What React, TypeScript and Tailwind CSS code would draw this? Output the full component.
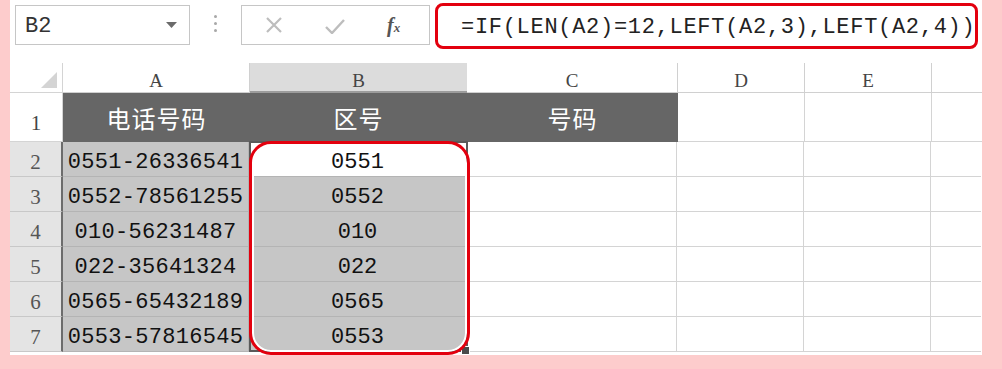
import React from "react";

const mono = { fontFamily: '"Liberation Mono", "DejaVu Sans Mono", monospace' };
const serif = { fontFamily: '"Liberation Serif", "DejaVu Serif", serif' };
const cjk = { fontFamily: '"Noto Sans CJK SC", "Noto Sans", sans-serif' };

const rows = [
  { n: "2", phone: "0551-26336541", code: "0551" },
  { n: "3", phone: "0552-78561255", code: "0552" },
  { n: "4", phone: "010-56231487", code: "010" },
  { n: "5", phone: "022-35641324", code: "022" },
  { n: "6", phone: "0565-65432189", code: "0565" },
  { n: "7", phone: "0553-57816545", code: "0553" },
];

const FormulaBar: React.FC = () => (
  <div className="flex h-[63px] items-start pl-[5px]">
    {/* Name box */}
    <div className="mt-[5px] flex h-[40px] w-[175px] items-center justify-between border border-[#c6c6c6] pl-[9px] pr-[12px]">
      <span style={mono} className="pt-[2px] text-[22px] text-[#333]">
        B2
      </span>
      <svg width="11" height="6" viewBox="0 0 11 6">
        <path d="M0 0 L11 0 L5.5 6 Z" fill="#6b6b6b" />
      </svg>
    </div>
    <div className="ml-[24px] mt-[15px] flex flex-col gap-[4px]">
      <div className="h-[3px] w-[3px] rounded-full bg-[#a8a8a8]" />
      <div className="h-[3px] w-[3px] rounded-full bg-[#a8a8a8]" />
      <div className="h-[3px] w-[3px] rounded-full bg-[#a8a8a8]" />
    </div>
    {/* Cancel / enter / fx */}
    <div className="ml-[24px] mt-[5px] flex h-[40px] w-[189px] items-center border border-[#c6c6c6]">
      <svg className="ml-[24px]" width="16" height="16" viewBox="0 0 16 16">
        <path d="M1 1 L15 15 M15 1 L1 15" stroke="#bdbdbd" strokeWidth="2.2" />
      </svg>
      <svg className="ml-[43px] mt-[3px]" width="20" height="15" viewBox="0 0 20 15">
        <path d="M1 8 L7 14 L19 1" stroke="#bdbdbd" strokeWidth="2.4" fill="none" />
      </svg>
      <span style={serif} className="ml-[42px] text-[20px] font-bold italic text-[#555]">
        f<span className="text-[13px]">x</span>
      </span>
    </div>
    {/* Formula */}
    <div className="ml-[5px] mt-[3px] flex h-[46px] w-[543px] items-center rounded-[8px] border-[3px] border-[#e3000e] pl-[23px]">
      <span style={mono} className="pt-[2px] text-[22px] tracking-[0.7px] text-[#222]">
        =IF(LEN(A2)=12,LEFT(A2,3),LEFT(A2,4))
      </span>
    </div>
  </div>
);

const App: React.FC = () => {
  return (
    <div className="h-[369px] w-[1002px] bg-[#fdcccc] pb-[14px] pl-[10px] pr-[20px]">
      <div className="flex h-[355px] w-[972px] flex-col bg-white">
        <FormulaBar />

        <div className="relative flex flex-col">
          {/* Column headers */}
          <div className="flex h-[30px]">
            <div className="flex w-[53px] items-end justify-end border-r border-b border-[#d4d4d4] pb-[4px] pr-[5px]">
              <svg width="16" height="16" viewBox="0 0 16 16">
                <path d="M16 0 L16 16 L0 16 Z" fill="#d4d4d4" />
              </svg>
            </div>
            <div style={serif} className="flex w-[187px] items-center justify-center border-r border-b border-[#d0d0d0] pt-[8px] text-[19px] text-[#444]">
              A
            </div>
            <div style={serif} className="flex w-[217px] items-center justify-center border-b-2 border-[#9c9c9c] bg-[#dcdcdc] pt-[8px] text-[19px] text-[#444]">
              B
            </div>
            <div style={serif} className="flex w-[211px] items-center justify-center border-r border-b border-[#d0d0d0] pt-[8px] text-[19px] text-[#444]">
              C
            </div>
            <div style={serif} className="flex w-[127px] items-center justify-center border-r border-b border-[#d0d0d0] pt-[8px] text-[19px] text-[#444]">
              D
            </div>
            <div style={serif} className="flex w-[127px] items-center justify-center border-r border-b border-[#d0d0d0] pt-[8px] text-[19px] text-[#444]">
              E
            </div>
            <div className="w-[50px] border-b border-[#d0d0d0]" />
          </div>

          {/* Row 1 */}
          <div className="flex h-[49px]">
            <div style={serif} className="flex w-[53px] items-end justify-center border-r border-b border-[#d4d4d4] pb-[2px] text-[21px] text-[#444]">
              1
            </div>
            <div style={cjk} className="flex w-[187px] items-center justify-center bg-[#666666] text-[24px] tracking-[1px] text-white">
              电话号码
            </div>
            <div style={cjk} className="flex w-[217px] items-center justify-center bg-[#666666] text-[24px] tracking-[1px] text-white">
              区号
            </div>
            <div style={cjk} className="flex w-[211px] items-center justify-center bg-[#666666] text-[24px] tracking-[1px] text-white">
              号码
            </div>
            <div className="w-[127px] border-r border-b border-[#d4d4d4]" />
            <div className="w-[127px] border-r border-b border-[#d4d4d4]" />
            <div className="w-[50px] border-b border-[#d4d4d4]" />
          </div>

          {/* Data rows */}
          {rows.map((r, i) => (
            <div key={r.n} className="flex h-[35px]">
              <div style={serif} className="flex w-[53px] items-center justify-center border-r-2 border-b border-r-[#6c6c6c] border-b-[#c8c8c8] bg-[#e4e4e4] pt-[7px] text-[21px] text-[#555]">
                {r.n}
              </div>
              <div style={mono} className="flex w-[186px] items-center justify-center border-r border-b border-[#b4b4b4] bg-[#c6c6c6] pt-[7px] text-[22px] tracking-[0.3px] text-[#111]">
                {r.phone}
              </div>
              <div
                style={mono}
                className={
                  i === 0
                    ? "flex w-[217px] items-center justify-center border-b border-[#b4b4b4] bg-white pt-[7px] text-[22px] text-[#111]"
                    : "flex w-[217px] items-center justify-center border-b border-[#b4b4b4] bg-[#c6c6c6] pt-[7px] text-[22px] text-[#111]"
                }
              >
                {r.code}
              </div>
              <div className="w-[211px] border-r border-b border-[#d4d4d4]" />
              <div className="w-[127px] border-r border-b border-[#d4d4d4]" />
              <div className="w-[127px] border-r border-b border-[#d4d4d4]" />
              <div className="w-[50px] border-b border-[#d4d4d4]" />
            </div>
          ))}

          {/* Selection border with fill handle */}
          <div className="pointer-events-none absolute left-[239px] top-[78px] h-[211px] w-[219px] border-2 border-[#5a5a5a]" />
          <div className="absolute left-[451px] top-[283px] h-[9px] w-[9px] border border-white bg-[#4a4a4a]" />

          {/* Red annotation */}
          <div className="pointer-events-none absolute left-[239px] top-[78px] h-[214px] w-[221px] rounded-[22px] border-[3px] border-[#e3000e] shadow-[inset_0_0_0_2px_white]" />
        </div>
      </div>
    </div>
  );
};

export default App;
